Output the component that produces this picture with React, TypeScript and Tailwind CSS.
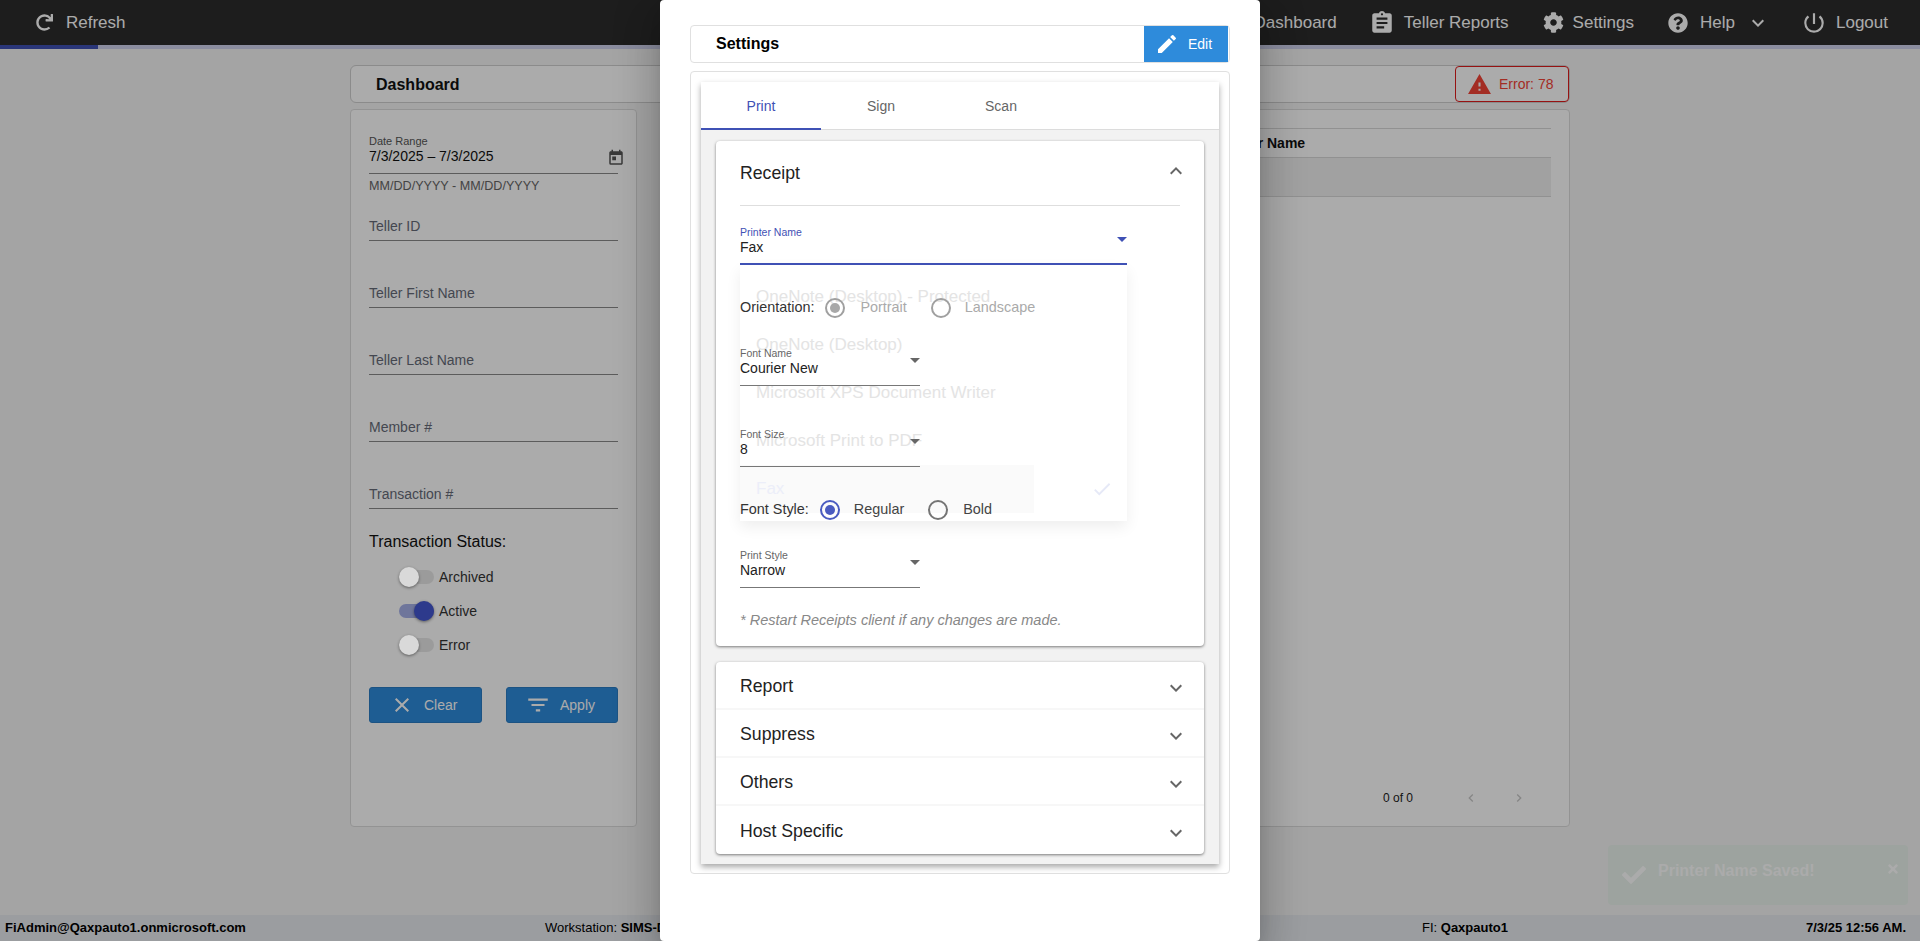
import React from 'react';
import {
  MdAssignment, MdExpandMore, MdExpandLess, MdPowerSettingsNew,
  MdToday, MdClose, MdFilterList, MdWarning, MdEdit, MdCheck, MdChevronLeft, MdChevronRight,
} from 'react-icons/md';
import { FaRedo, FaCog, FaQuestionCircle, FaCheck, FaTimes } from 'react-icons/fa';

const Arrow = ({ color = '#666666' }: { color?: string }) => (
  <svg className="absolute right-0 top-[11px]" width="10" height="5" viewBox="0 0 10 5">
    <polygon points="0,0 10,0 5,5" fill={color} />
  </svg>
);

const TextField = ({ label, className = 'h-[67px]' }: { label: string; className?: string }) => (
  <div className={`flex flex-col justify-end border-b border-[#8a8a8a] pb-[6px] text-[14px] leading-[16px] text-[#666b78] ${className}`}>
    {label}
  </div>
);

// thumbs sit above the backdrop, they read brighter than anything under it in the picture
const Toggle = ({ label, on = false }: { label: string; on?: boolean }) => (
  <div className="flex h-[34px] items-center pl-[30px] text-[14px] text-[#333]">
    <div className={`relative h-[14px] w-[35px] rounded-full ${on ? 'bg-[#a6b0e8]' : 'bg-[#e8e8e8]'}`}>
      <div
        className={`absolute top-[-3px] z-20 h-[20px] w-[20px] rounded-full shadow-[0_1px_3px_rgba(0,0,0,0.45)] ${on ? 'right-0 bg-[#2d3a8c]' : 'left-0 bg-[#d9d9d9]'}`}
      />
    </div>
    <span className="ml-[5px]">{label}</span>
  </div>
);

const SelectField = ({ label, value, className = '' }: { label: string; value: string; className?: string }) => (
  <div className={`relative h-[39px] w-[180px] border-b border-[#777] ${className}`}>
    <div className="text-[10.5px] leading-[13px] text-[#666]">{label}</div>
    <div className="-mt-[2px] text-[14px] leading-[20px] text-[#222]">{value}</div>
    <Arrow />
  </div>
);

const Radio = ({ label, checked = false, disabled = false, gap }: { label: string; checked?: boolean; disabled?: boolean; gap: string }) => {
  const ring = disabled ? 'border-[#a0a0a0]' : checked ? 'border-[#4a5bc0]' : 'border-[#757575]';
  const dot = disabled ? 'bg-[#a8a8a8]' : 'bg-[#4a5bc0]';
  return (
    <div className="flex items-center">
      <div className={`flex h-[20px] w-[20px] items-center justify-center rounded-full border-2 ${ring}`}>
        {checked && <div className={`h-[10px] w-[10px] rounded-full ${dot}`} />}
      </div>
      <span className={`${gap} ${disabled ? 'text-[#aaaaaa]' : 'text-[#444]'}`}>{label}</span>
    </div>
  );
};

const NavItem = ({ icon, label, className = '', gap = 'gap-[10px]' }: { icon: React.ReactNode; label: string; className?: string; gap?: string }) => (
  <div className={`flex items-center ${gap} ${className}`}>
    {icon}
    <span>{label}</span>
  </div>
);

const menuItems = ['OneNote (Desktop) - Protected', 'OneNote (Desktop)', 'Microsoft XPS Document Writer', 'Microsoft Print to PDF'];

export default function App() {
  return (
    <div className="relative flex h-[941px] w-full flex-col overflow-hidden bg-[#f5f5f5] font-['Liberation_Sans',Arial,sans-serif] text-[#111]">
      {/* top bar */}
      <header className="flex h-[45px] shrink-0 items-center bg-[#2c2c2c] pl-[36px] pr-[32px] text-[17px] text-white">
        <NavItem icon={<FaRedo size={17} />} label="Refresh" gap="gap-[13px]" />
        <div className="ml-auto flex items-center">
          <span>Dashboard</span>
          <NavItem className="ml-[32px]" icon={<MdAssignment size={26} />} label="Teller Reports" gap="gap-[9px]" />
          <NavItem className="ml-[34px]" icon={<FaCog size={21} />} label="Settings" gap="gap-[9px]" />
          <NavItem className="ml-[34px]" icon={<FaQuestionCircle size={20} />} label="Help" gap="gap-[12px]" />
          <MdExpandMore size={24} className="ml-[11px]" />
          <NavItem className="ml-[31px]" icon={<MdPowerSettingsNew size={26} />} label="Logout" gap="gap-[9px]" />
        </div>
      </header>
      <div className="h-[4px] shrink-0 bg-[#cfd3ee]">
        <div className="h-full w-[98px] bg-[#3f51b5]" />
      </div>

      {/* page */}
      <main className="flex min-h-0 flex-1 flex-col pl-[350px] pr-[350px] pt-[16px]">
        <div className="flex h-[38px] shrink-0 items-center justify-between rounded-md border border-[#cfcfcf] bg-white pl-[25px]">
          <span className="pt-[1px] text-[16px] font-bold">Dashboard</span>
          <div className="flex h-[36px] w-[114px] items-center rounded-[4px] border-[1.5px] border-[#e01b1b] pl-[11px] text-[14px] text-[#f44336]">
            <MdWarning size={25} className="text-[#f44336]" />
            <span className="ml-[7px]">Error: 78</span>
          </div>
        </div>

        <div className="mt-[6px] flex h-[718px] gap-[33px]">
          {/* filters */}
          <aside className="w-[287px] shrink-0 rounded-[4px] border border-[#dcdcdc] bg-white px-[18px] pt-[25px]">
            <div className="flex h-[39px] flex-col border-b border-[#8a8a8a]">
              <div className="text-[11px] leading-[12px] text-[#555]">Date Range</div>
              <div className="flex items-start justify-between text-[14px] leading-[18px] text-[#111]">
                <span>7/3/2025 – 7/3/2025</span>
                <MdToday size={18} className="-mr-[7px] mt-[2px] text-[#555]" />
              </div>
            </div>
            <div className="mt-[5px] text-[12.6px] leading-[14px] text-[#666]">MM/DD/YYYY - MM/DD/YYYY</div>
            <TextField label="Teller ID" className="h-[48px]" />
            <TextField label="Teller First Name" />
            <TextField label="Teller Last Name" />
            <TextField label="Member #" />
            <TextField label="Transaction #" />
            <div className="mt-[23px] text-[16px] leading-[20px]">Transaction Status:</div>
            <div className="mt-[8px]">
              <Toggle label="Archived" />
              <Toggle label="Active" on />
              <Toggle label="Error" />
            </div>
            <div className="mt-[25px] flex justify-between text-[14px] text-white">
              <button className="flex h-[36px] w-[113px] items-center rounded-[3px] border border-[#2a7cc4] bg-[#2e8bdb] pl-[20px]">
                <MdClose size={24} />
                <span className="ml-[10px]">Clear</span>
              </button>
              <button className="flex h-[36px] w-[112px] items-center rounded-[3px] border border-[#2a7cc4] bg-[#2e8bdb] pl-[18px]">
                <MdFilterList size={26} />
                <span className="ml-[9px]">Apply</span>
              </button>
            </div>
          </aside>

          {/* results */}
          <section className="flex min-w-0 flex-1 flex-col rounded-[4px] border border-[#dcdcdc] bg-white px-[18px] pt-[18px]">
            <div className="flex h-[30px] items-center border-y border-[#d8d8d8] pl-[529px] text-[14px] font-bold">Printer Name</div>
            <div className="h-[39px] border-b border-[#d8d8d8] bg-[#f0f0f0]" />
            <div className="mt-auto flex h-[56px] items-center pl-[694px] text-[12px] text-[#222]">
              <span>0 of 0</span>
              <MdChevronLeft size={16} className="ml-[50px] text-[#c8c8c8]" />
              <MdChevronRight size={16} className="ml-[32px] text-[#c8c8c8]" />
            </div>
          </section>
        </div>
      </main>

      <footer className="flex h-[26px] shrink-0 items-center bg-[#e7eaef] text-[13px] text-black">
        <span className="w-[545px] pl-[5px] font-bold">FiAdmin@Qaxpauto1.onmicrosoft.com</span>
        <span className="w-[877px]">Workstation: <b>SIMS-DESKTOP</b></span>
        <span>FI: <b>Qaxpauto1</b></span>
        <b className="ml-auto pr-[14px]">7/3/25 12:56 AM.</b>
      </footer>

      {/* saved toast */}
      <div className="absolute left-[1608px] top-[845px] flex h-[60px] w-[300px] items-start rounded-[4px] bg-[#eaf4ed] pl-[14px] pt-[18px] text-[16px] font-bold text-white">
        <FaCheck size={24} />
        <span className="-mt-[4px] ml-[12px] leading-[24px]">Printer Name Saved!</span>
        <FaTimes size={14} className="-mt-[1px] ml-auto mr-[8px]" />
      </div>

      {/* backdrop */}
      <div className="absolute inset-0 z-10 bg-black/[0.33]" />

      {/* settings dialog */}
      <div className="absolute inset-y-0 left-[660px] z-20 w-[600px] rounded-[4px] bg-white px-[30px] pt-[25px] shadow-[0_11px_15px_-7px_rgba(0,0,0,0.2),0_24px_38px_3px_rgba(0,0,0,0.14),0_9px_46px_8px_rgba(0,0,0,0.12)]">
        <div className="flex h-[38px] items-center justify-between rounded-[4px] border border-[#e0e0e0] pl-[25px] pr-[1px]">
          <span className="text-[16px] font-bold text-black">Settings</span>
          <button className="flex h-[36px] w-[84px] items-center bg-[#2e8bdb] pl-[11px] text-[14px] text-white">
            <MdEdit size={24} />
            <span className="ml-[9px]">Edit</span>
          </button>
        </div>

        <div className="mt-[8px] h-[803px] rounded-[4px] border border-[#e0e0e0] p-[10px]">
          <div className="h-[782px] bg-[#f2f2f2] shadow-[0_3px_6px_rgba(0,0,0,0.35)]">
            {/* tabs */}
            <div className="flex h-[48px] border-b border-[#dcdcdc] bg-white text-[14px] text-[#666]">
              <div className="flex h-[48px] w-[120px] items-center justify-center border-b-2 border-[#3f51b5] pt-[2px] text-[#3f51b5]">Print</div>
              <div className="flex w-[120px] items-center justify-center pt-[2px]">Sign</div>
              <div className="flex w-[120px] items-center justify-center pt-[2px]">Scan</div>
            </div>

            <div className="px-[15px] pt-[11px]">
              {/* receipt */}
              <div className="rounded-[4px] bg-white shadow-[0_1px_3px_rgba(0,0,0,0.5)]">
                <div className="mx-[24px] flex h-[65px] items-center justify-between border-b border-[#dedede] text-[17.7px] text-[#222]">
                  <span>Receipt</span>
                  <MdExpandLess size={24} className="-mr-[8px] -mt-[4px] text-[#666]" />
                </div>
                <div className="relative px-[24px] pb-[16px] pt-[20px] text-[14px]">
                  {/* printer menu, fading out under the form */}
                  <div className="absolute left-[24px] top-[59px] h-[256px] w-[387px] bg-white py-[8px] text-[17px] text-[#e4e4e4] shadow-[0_6px_14px_rgba(0,0,0,0.07)]">
                    {menuItems.map((item) => (
                      <div key={item} className="flex h-[48px] items-center pl-[16px]">{item}</div>
                    ))}
                    <div className="relative flex h-[48px] w-[294px] items-center bg-[#fafafa] pl-[16px] text-[#eceef9]">
                      Fax
                      <MdCheck size={22} className="absolute left-[351px] top-[13px] text-[#e6e9f7]" />
                    </div>
                  </div>

                  <div className="relative h-[39px] w-[387px] border-b-2 border-[#3f51b5]">
                    <div className="text-[10.5px] leading-[13px] text-[#3f51b5]">Printer Name</div>
                    <div className="-mt-[2px] leading-[20px] text-[#222]">Fax</div>
                    <Arrow color="#3f51b5" />
                  </div>

                  <div className="relative mt-[31px] flex h-[24px] items-center text-[14.4px] text-[#333]">
                    <span className="mr-[11px]">Orientation:</span>
                    <Radio label="Portrait" checked disabled gap="ml-[15px]" />
                    <div className="ml-[24px]"><Radio label="Landscape" disabled gap="ml-[14px]" /></div>
                  </div>

                  <SelectField label="Font Name" value="Courier New" className="mt-[27px]" />
                  <SelectField label="Font Size" value="8" className="mt-[42px]" />

                  <div className="relative mt-[31px] flex h-[24px] items-center text-[14.4px] text-[#333]">
                    <span className="mr-[11px]">Font Style:</span>
                    <Radio label="Regular" checked gap="ml-[14px]" />
                    <div className="ml-[24px]"><Radio label="Bold" gap="ml-[15px]" /></div>
                  </div>

                  <SelectField label="Print Style" value="Narrow" className="mt-[27px]" />

                  <div className="mt-[22px] text-[14.5px] italic leading-[20px] text-[#888]">* Restart Receipts client if any changes are made.</div>
                </div>
              </div>

              {/* collapsed sections */}
              <div className="mt-[16px] rounded-[4px] bg-white shadow-[0_1px_3px_rgba(0,0,0,0.5)]">
                {['Report', 'Suppress', 'Others', 'Host Specific'].map((title, i) => (
                  <div
                    key={title}
                    className={`flex h-[48px] items-center justify-between pl-[24px] pr-[16px] text-[17.7px] text-[#222] ${i < 3 ? 'border-b-2 border-[#f7f7f7]' : ''}`}
                  >
                    <span className="pt-[2px]">{title}</span>
                    <MdExpandMore size={24} className="mt-[5px] text-[#666]" />
                  </div>
                ))}
              </div>
            </div>
          </div>
        </div>
      </div>
    </div>
  );
}
